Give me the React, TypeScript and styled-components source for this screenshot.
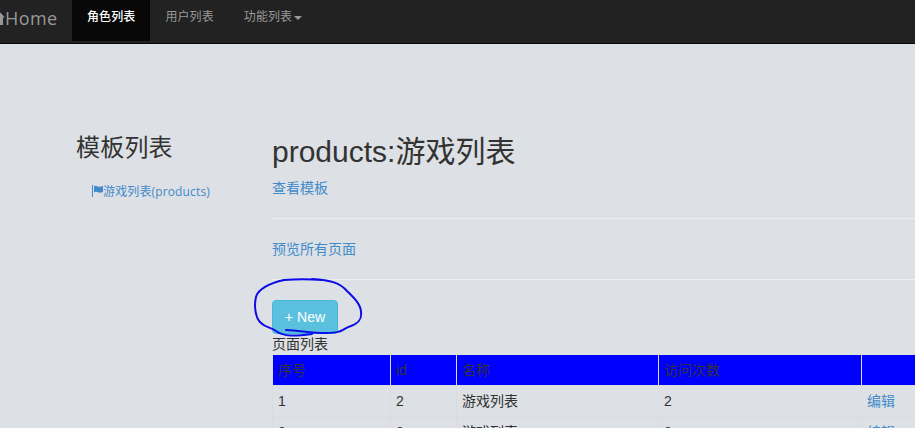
import React from 'react';
import styled, { createGlobalStyle } from 'styled-components';

const Global = createGlobalStyle`
  * { box-sizing: border-box; }
  html, body { margin: 0; height: 428px; overflow: hidden; background: #dde0e4; }
  body { font: 14px/20px "Liberation Sans", "Noto Sans CJK SC", sans-serif; color: #333; }
`;

const Navbar = styled.nav`
  display: flex;
  height: 44px;
  background: #222;
  border-bottom: 1px solid #080808;
  font-family: "Open Sans", "Noto Sans CJK SC", sans-serif;
  color: #999;
`;
const Brand = styled.a`
  display: flex;
  width: 72px;
  height: 36px;
  align-items: center;
  font-size: 18px;
  line-height: 36px;
  letter-spacing: 0.4px;
  white-space: nowrap;
  svg { flex: none; margin-left: -9px; }
`;
const NavItem = styled.a<{ $active?: boolean }>`
  display: flex;
  height: 41px;
  padding: 7px 15px 0;
  font-size: 12px;
  line-height: 20px;
  letter-spacing: 0.1px;
  white-space: nowrap;
  background: ${p => (p.$active ? '#080808' : 'transparent')};
  color: ${p => (p.$active ? '#fff' : '#999')};
  font-weight: ${p => (p.$active ? 500 : 400)};
`;
const Caret = styled.span`
  margin: 9px 0 0 2px;
  align-self: flex-start;
  border: 4px solid transparent;
  border-top-color: #999;
  border-bottom: 0;
`;

const Page = styled.div`
  display: flex;
  height: 384px;
  overflow: hidden;
  padding-left: 76px;
`;
const Sidebar = styled.aside`
  flex: none;
  width: 196px;
  padding-top: 91px;
`;
const SideTitle = styled.h3`
  margin: 0;
  font-size: 24px;
  font-weight: 400;
  line-height: 26px;
  letter-spacing: 0.2px;
`;
const SideLink = styled.a`
  display: flex;
  align-items: center;
  margin-top: 21px;
  padding-left: 16px;
  font: 12px/20px "Open Sans", "Noto Sans CJK SC", sans-serif;
  letter-spacing: 0.14px;
  color: #428bca;
  white-space: nowrap;
  svg { flex: none; margin-top: -2px; }
`;
const Main = styled.main`
  flex: 1;
  min-width: 0;
  padding-top: 91px;
`;
const Title = styled.h2`
  margin: 0;
  font-size: 30px;
  font-weight: 400;
  line-height: 33px;
`;
const Link = styled.a`
  display: block;
  color: #428bca;
`;
const TemplateLink = styled(Link)`
  margin-top: 10px;
`;
const Rule = styled.hr`
  height: 1px;
  margin: 20px 0;
  border: 0;
  background: #eee;
`;
const ButtonArea = styled.div`
  position: relative;
  height: 34px;
`;
const NewButton = styled.button`
  display: block;
  width: 66px;
  height: 34px;
  padding: 0;
  border: 1px solid #46b8da;
  border-radius: 4px;
  background: #5bc0de;
  color: #fff;
  font: 14px/20px "Liberation Sans", sans-serif;
  letter-spacing: 0.1px;
`;
const Scribble = styled.svg`
  position: absolute;
  left: -22px;
  top: -25px;
  overflow: visible;
`;
const Table = styled.div`
  display: grid;
  margin-top: 1px;
  grid-template-columns: 118px 66px 202px 203px 1fr;
  border-left: 1px solid #dadcdf;
`;
const HeadCell = styled.div`
  height: 30px;
  padding: 5px;
  background: #00f;
  border-right: 1px solid #ddd;
  &:nth-child(5) { border-right: 0; }
`;
const Cell = styled.div`
  height: 31px;
  padding: 5px;
  border-top: 1px solid #dadcdf;
  border-right: 1px solid #dadcdf;
`;
const ActionCell = styled(Cell)`
  border-right: 0;
`;

const headings = ['序号', 'id', '名称', '访问次数', ''];
const rows = [
  ['1', '2', '游戏列表', '2'],
  ['2', '3', '游戏列表', '3'],
];

export default function App() {
  return (
    <>
      <Global />
      <Navbar>
        <Brand>
          <svg width="14" height="16" viewBox="0 0 14 16" fill="#999">
            <path d="M7 0 14 7.500h-2V15H8.500v-4h-3v4H2V7.500H0z" />
          </svg>
          Home
        </Brand>
        <NavItem $active>角色列表</NavItem>
        <NavItem>用户列表</NavItem>
        <NavItem>功能列表<Caret /></NavItem>
      </Navbar>
      <Page>
        <Sidebar>
          <SideTitle>模板列表</SideTitle>
          <SideLink>
            <svg width="11" height="12" viewBox="0 0 11 12" fill="#428bca">
              <path d="M0 0h1v12H0zM2 1.200c2-1 3 .4 5 .6 1.500.1 2.500-.3 4-1V7c-2 1-3.500 1-5 .3C4.500 6.600 3.500 6.500 2 7.300z" />
            </svg>
            游戏列表(products)
          </SideLink>
        </Sidebar>
        <Main>
          <Title>products:游戏列表</Title>
          <TemplateLink>查看模板</TemplateLink>
          <Rule />
          <Link>预览所有页面</Link>
          <Rule />
          <ButtonArea>
            <NewButton>+ New</NewButton>
            <Scribble width="115" height="65" fill="none" stroke="#0c0ce8" strokeWidth="2" strokeLinecap="round" strokeLinejoin="round">
              <path d="M72 5C60 4 46 4 34 5C20 8 8 14 6 22C4 30 5 43 11 48C16 53 21 52 26 56C34 62 46 61 62 59M36 55C52 56 62 58 76 58C94 58 91 54 101 51C109 48 112 44 111 37C111 29 103 22 97 16C90 8 81 5 62 4" />
            </Scribble>
          </ButtonArea>
          <div>页面列表</div>
          <Table>
            {headings.map((t, i) => <HeadCell key={i}>{t}</HeadCell>)}
            {rows.map(r => (
              <React.Fragment key={r[0]}>
                {r.map((t, i) => <Cell key={i}>{t}</Cell>)}
                <ActionCell><Link>编辑</Link></ActionCell>
              </React.Fragment>
            ))}
          </Table>
        </Main>
      </Page>
    </>
  );
}
